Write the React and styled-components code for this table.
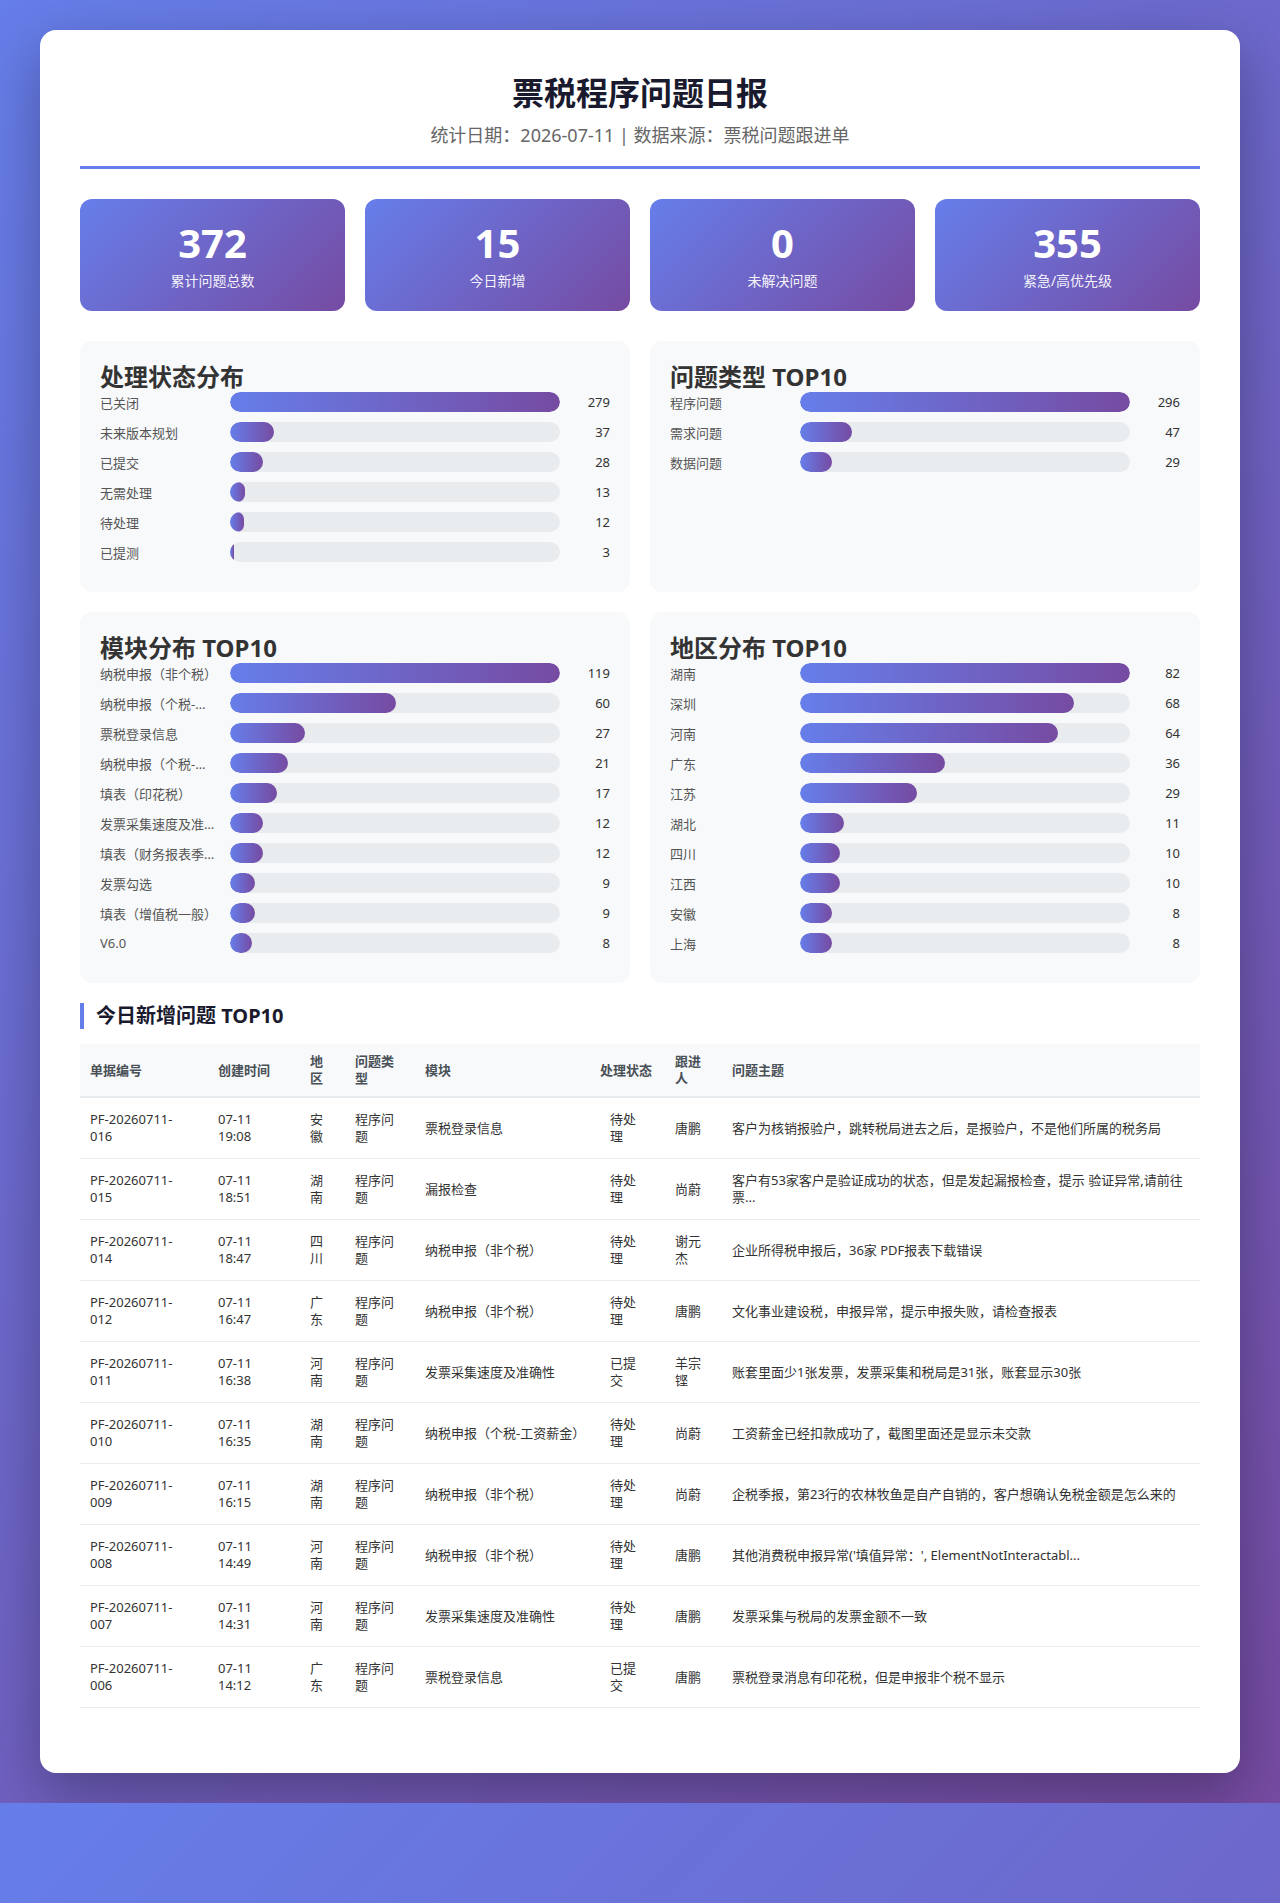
import React from 'react';
import styled, { createGlobalStyle } from 'styled-components';

const GlobalStyle = createGlobalStyle`
  * { box-sizing: border-box; }
  body {
    margin: 0;
    padding: 30px 20px;
    font-family: "Noto Sans", "Noto Sans CJK SC", sans-serif;
    background: linear-gradient(135deg, #667eea 0%, #764ba2 100%);
    color: #333;
  }
`;

const Container = styled.div`
  max-width: 1200px;
  margin: 0 auto;
  background: #ffffff;
  border-radius: 16px;
  padding: 40px;
  box-shadow: 0 20px 60px rgba(0, 0, 0, 0.3);
`;

const Header = styled.div`
  text-align: center;
  padding-bottom: 18px;
  border-bottom: 3px solid #667eea;
  margin-bottom: 30px;
`;

const Title = styled.h1`
  margin: 0;
  font-size: 32px;
  line-height: 46px;
  font-weight: 700;
  color: #1a1a2e;
`;

const Subtitle = styled.div`
  margin-top: 6px;
  font-size: 18px;
  line-height: 26px;
  color: #666;
`;

const StatsGrid = styled.div`
  display: grid;
  grid-template-columns: repeat(4, 1fr);
  gap: 20px;
  margin-bottom: 30px;
`;

const StatCard = styled.div`
  background: linear-gradient(135deg, #667eea 0%, #764ba2 100%);
  border-radius: 12px;
  padding: 20px;
  text-align: center;
  color: #fff;
`;

const StatNumber = styled.div`
  font-size: 40px;
  line-height: 48px;
  font-weight: 700;
`;

const StatLabel = styled.div`
  margin-top: 4px;
  font-size: 14px;
  line-height: 20px;
  opacity: 0.92;
`;

const ChartsGrid = styled.div`
  display: grid;
  grid-template-columns: 1fr 1fr;
  gap: 20px;
  margin-bottom: 20px;
`;

const Panel = styled.div`
  background: #f8f9fa;
  border-radius: 12px;
  padding: 20px;
`;

const PanelTitle = styled.h3`
  margin: 0;
  font-size: 24px;
  line-height: 31px;
  font-weight: 700;
  color: #333;
`;

const BarRow = styled.div`
  display: flex;
  align-items: center;
  height: 20px;
  margin-bottom: 10px;
`;

const BarLabel = styled.div`
  width: 118px;
  flex-shrink: 0;
  margin-right: 12px;
  font-size: 13px;
  color: #555;
  white-space: nowrap;
  overflow: hidden;
  text-overflow: ellipsis;
`;

const BarTrack = styled.div`
  flex: 1;
  height: 20px;
  background: #e9ecef;
  border-radius: 10px;
  overflow: hidden;
`;

const BarFill = styled.div`
  height: 100%;
  border-radius: 10px;
  background: linear-gradient(90deg, #667eea 0%, #764ba2 100%);
`;

const BarValue = styled.div`
  width: 40px;
  flex-shrink: 0;
  margin-left: 10px;
  text-align: right;
  font-size: 13px;
  color: #333;
`;

const Section = styled.div`
  margin-bottom: 25px;
`;

const SectionTitle = styled.h2`
  margin: 0 0 15px;
  padding-left: 12px;
  border-left: 4px solid #667eea;
  font-size: 20px;
  line-height: 26px;
  font-weight: 700;
  color: #1a1a2e;
`;

const Table = styled.table`
  width: 100%;
  border-collapse: collapse;
  table-layout: fixed;
  font-size: 13px;
`;

const Th = styled.th`
  text-align: left;
  padding: 9px 10px;
  background: #f8f9fa;
  border-bottom: 2px solid #e9ecef;
  font-weight: 600;
  color: #495057;
  line-height: 17px;
`;

const Td = styled.td`
  padding: 13px ${props => props.$padRight || 10}px 13px 10px;
  border-bottom: 1px solid #e9ecef;
  line-height: 17px;
  color: #333;
  vertical-align: middle;
`;

const StatusBadge = styled.span`
  display: inline-block;
  padding: 0 10px;
`;

const statusData = [
  ['已关闭', 279], ['未来版本规划', 37], ['已提交', 28],
  ['无需处理', 13], ['待处理', 12], ['已提测', 3],
];

const typeData = [['程序问题', 296], ['需求问题', 47], ['数据问题', 29]];

const moduleData = [
  ['纳税申报（非个税）', 119], ['纳税申报（个税-工资薪金）', 60], ['票税登录信息', 27],
  ['纳税申报（个税-经营所得）', 21], ['填表（印花税）', 17], ['发票采集速度及准确性', 12],
  ['填表（财务报表季报）', 12], ['发票勾选', 9], ['填表（增值税一般）', 9], ['V6.0', 8],
];

const regionData = [
  ['湖南', 82], ['深圳', 68], ['河南', 64], ['广东', 36], ['江苏', 29],
  ['湖北', 11], ['四川', 10], ['江西', 10], ['安徽', 8], ['上海', 8],
];

const issues = [
  ['PF-20260711-016', '07-11 19:08', '安徽', '程序问题', '票税登录信息', '待处理', '唐鹏', '客户为核销报验户，跳转税局进去之后，是报验户，不是他们所属的税务局'],
  ['PF-20260711-015', '07-11 18:51', '湖南', '程序问题', '漏报检查', '待处理', '尚蔚', '客户有53家客户是验证成功的状态，但是发起漏报检查，提示 验证异常,请前往票...'],
  ['PF-20260711-014', '07-11 18:47', '四川', '程序问题', '纳税申报（非个税）', '待处理', '谢元杰', '企业所得税申报后，36家 PDF报表下载错误'],
  ['PF-20260711-012', '07-11 16:47', '广东', '程序问题', '纳税申报（非个税）', '待处理', '唐鹏', '文化事业建设税，申报异常，提示申报失败，请检查报表'],
  ['PF-20260711-011', '07-11 16:38', '河南', '程序问题', '发票采集速度及准确性', '已提交', '羊宗铿', '账套里面少1张发票，发票采集和税局是31张，账套显示30张'],
  ['PF-20260711-010', '07-11 16:35', '湖南', '程序问题', '纳税申报（个税-工资薪金）', '待处理', '尚蔚', '工资薪金已经扣款成功了，截图里面还是显示未交款'],
  ['PF-20260711-009', '07-11 16:15', '湖南', '程序问题', '纳税申报（非个税）', '待处理', '尚蔚', '企税季报，第23行的农林牧鱼是自产自销的，客户想确认免税金额是怎么来的'],
  ['PF-20260711-008', '07-11 14:49', '河南', '程序问题', '纳税申报（非个税）', '待处理', '唐鹏', "其他消费税申报异常('填值异常：', ElementNotInteractabl..."],
  ['PF-20260711-007', '07-11 14:31', '河南', '程序问题', '发票采集速度及准确性', '待处理', '唐鹏', '发票采集与税局的发票金额不一致'],
  ['PF-20260711-006', '07-11 14:12', '广东', '程序问题', '票税登录信息', '已提交', '唐鹏', '票税登录消息有印花税，但是申报非个税不显示'],
];

const columns = [
  ['单据编号', 128], ['创建时间', 92], ['地区', 45], ['问题类型', 70],
  ['模块', 175], ['处理状态', 75], ['跟进人', 57], ['问题主题', 478],
];

const BarChart = ({ title, data }) => {
  const max = Math.max(...data.map(d => d[1]));
  return (
    <Panel>
      <PanelTitle>{title}</PanelTitle>
      {data.map(([label, value]) => (
        <BarRow key={label}>
          <BarLabel>{label}</BarLabel>
          <BarTrack>
            <BarFill style={{ width: `${(value / max) * 100}%` }} />
          </BarTrack>
          <BarValue>{value}</BarValue>
        </BarRow>
      ))}
    </Panel>
  );
};

export default function App() {
  return (
    <>
      <GlobalStyle />
      <Container>
        <Header>
          <Title>票税程序问题日报</Title>
          <Subtitle>统计日期：2026-07-11 | 数据来源：票税问题跟进单</Subtitle>
        </Header>

        <StatsGrid>
          {[['372', '累计问题总数'], ['15', '今日新增'], ['0', '未解决问题'], ['355', '紧急/高优先级']].map(([n, l]) => (
            <StatCard key={l}>
              <StatNumber>{n}</StatNumber>
              <StatLabel>{l}</StatLabel>
            </StatCard>
          ))}
        </StatsGrid>

        <ChartsGrid>
          <BarChart title="处理状态分布" data={statusData} />
          <BarChart title="问题类型 TOP10" data={typeData} />
          <BarChart title="模块分布 TOP10" data={moduleData} />
          <BarChart title="地区分布 TOP10" data={regionData} />
        </ChartsGrid>

        <Section>
          <SectionTitle>今日新增问题 TOP10</SectionTitle>
          <Table>
            <colgroup>
              {columns.map(([name, w]) => <col key={name} style={{ width: w }} />)}
            </colgroup>
            <thead>
              <tr>
                {columns.map(([name]) => <Th key={name}>{name}</Th>)}
              </tr>
            </thead>
            <tbody>
              {issues.map(row => (
                <tr key={row[0]}>
                  <Td $padRight={26}>{row[0]}</Td>
                  <Td $padRight={24}>{row[1]}</Td>
                  <Td>{row[2]}</Td>
                  <Td>{row[3]}</Td>
                  <Td>{row[4]}</Td>
                  <Td><StatusBadge>{row[5]}</StatusBadge></Td>
                  <Td>{row[6]}</Td>
                  <Td>{row[7]}</Td>
                </tr>
              ))}
            </tbody>
          </Table>
        </Section>
      </Container>
    </>
  );
}
